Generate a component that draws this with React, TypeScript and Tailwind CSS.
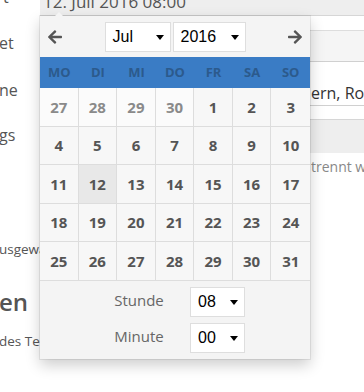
import React from "react";
import { FaArrowLeft, FaArrowRight } from "react-icons/fa";

function Caret() {
  return (
    <span className="w-0 h-0 border-l-[4px] border-r-[4px] border-t-[5px] border-l-transparent border-r-transparent border-t-black" />
  );
}

function Sel({ value, w }: { value: string; w: string }) {
  return (
    <div
      className={`${w} h-[30px] bg-white border border-[#dedede] flex items-center justify-between pl-[7px] pr-[6px] text-[16px] text-black font-['Liberation_Sans',Arial,sans-serif]`}
    >
      <span>{value}</span>
      <Caret />
    </div>
  );
}

const days: { d: number; other?: boolean; sel?: boolean }[] = [
  { d: 27, other: true },
  { d: 28, other: true },
  { d: 29, other: true },
  { d: 30, other: true },
  ...Array.from({ length: 31 }, (_, i) => ({ d: i + 1, sel: i + 1 === 12 })),
];

const heads = ["MO", "DI", "MI", "DO", "FR", "SA", "SO"];

export default function App() {
  return (
    <div className="relative w-[364px] h-[392px] overflow-hidden bg-white font-['Open_Sans',sans-serif] text-[#555]">
      <div className="flex">
        {/* left column */}
        <div className="w-[40px] shrink-0 overflow-hidden flex flex-col whitespace-nowrap">
          <div className="-mt-[15px] h-[24px] leading-[24px] text-[16px] pl-[3px]">t</div>
          <div className="mt-[22px] h-[24px] leading-[24px] text-[16px] -ml-[1px]">et</div>
          <div className="mt-[23px] h-[24px] leading-[24px] text-[16px] -ml-[1px]">ne</div>
          <div className="mt-[21px] h-[24px] leading-[24px] text-[16px] -ml-[1px]">gs</div>
          <div className="mt-[92px] h-[20px] leading-[20px] text-[13.5px] -ml-[1px]">usgewählt</div>
          <div className="mt-[28px] h-[30px] leading-[30px] text-[24px] font-semibold -ml-[1px]">en</div>
          <div className="mt-[14px] h-[20px] leading-[20px] text-[13.5px] -ml-[1px]">des Termins</div>
        </div>
        {/* right column */}
        <div className="flex-1 flex flex-col">
          <div className="-mt-[20px] h-[36px] bg-[#eeeeee] border-b border-[#d6d6d6] pl-[3px] pt-[10px] text-[17px] leading-[24px] text-[#555]">
            12. Juli 2016 08:00
          </div>
          <div className="h-[15px] bg-white border-b border-[#dddddd]" />
          <div className="h-[31px] bg-[#f5f5f5] border-b border-[#d0d0d0]" />
          <div className="h-[44px] bg-white border-b border-[#d0d0d0] flex items-center pl-[271px] pt-[18px] text-[16px] text-[#333] whitespace-nowrap">
            ern, Rom
          </div>
          <div className="h-[14px] bg-white border-b border-[#d6d6d6]" />
          <div className="h-[33px] bg-[#eeeeee]" />
          <div className="mt-[4px] pl-[271px] text-[14px] leading-[20px] text-[#888] whitespace-nowrap">
            trennt werden
          </div>
        </div>
      </div>

      {/* popup */}
      <div className="absolute left-[40px] top-[16px] w-[270px] h-[343px] bg-[#f4f4f4] shadow-[0_0_0_1px_rgba(0,0,0,0.07),0_6px_14px_rgba(0,0,0,0.2)] flex flex-col">
        <span className="absolute -top-[4px] left-[15px] w-0 h-0 border-l-[4px] border-r-[4px] border-b-[4px] border-l-transparent border-r-transparent border-b-[#f4f4f4]" />
        <div className="h-[41px] flex items-center justify-between px-[7px]">
          <FaArrowLeft className="text-[#555] w-[16px] h-[16px]" />
          <div className="flex gap-[2px] mt-[1px]">
            <Sel value="Jul" w="w-[66px]" />
            <Sel value="2016" w="w-[73px]" />
          </div>
          <FaArrowRight className="text-[#555] w-[16px] h-[16px]" />
        </div>
        <div className="h-[31px] bg-[#3a7cc5] grid grid-cols-7">
          {heads.map((h) => (
            <div
              key={h}
              className="flex items-center justify-center text-[13px] font-bold text-[#2c5a8c]"
            >
              {h}
            </div>
          ))}
        </div>
        <div className="grid grid-cols-7 grid-rows-5 h-[193px]">
          {days.map((c, i) => (
            <div
              key={i}
              className={`flex items-center justify-center text-[15px] font-bold border-b border-[#dddddd] ${
                i % 7 === 6 ? "" : "border-r"
              } ${
                c.other
                  ? "bg-[#fbfbfb] text-[#8a8a8a]"
                  : c.sel
                  ? "bg-[#e8e8e8] text-[#555]"
                  : "bg-[#f7f7f7] text-[#555]"
              }`}
            >
              {c.d}
            </div>
          ))}
        </div>
        <div className="flex-1 flex flex-col gap-[6px] pt-[6px]">
          <div className="flex items-center">
            <div className="ml-[50px] w-[98px] text-center text-[15px] text-[#666] -mt-[4px]">Stunde</div>
            <div className="ml-[2px]">
              <Sel value="08" w="w-[55px]" />
            </div>
          </div>
          <div className="flex items-center">
            <div className="ml-[50px] w-[98px] text-center text-[15px] text-[#666] -mt-[4px]">Minute</div>
            <div className="ml-[2px]">
              <Sel value="00" w="w-[55px]" />
            </div>
          </div>
        </div>
      </div>
    </div>
  );
}
